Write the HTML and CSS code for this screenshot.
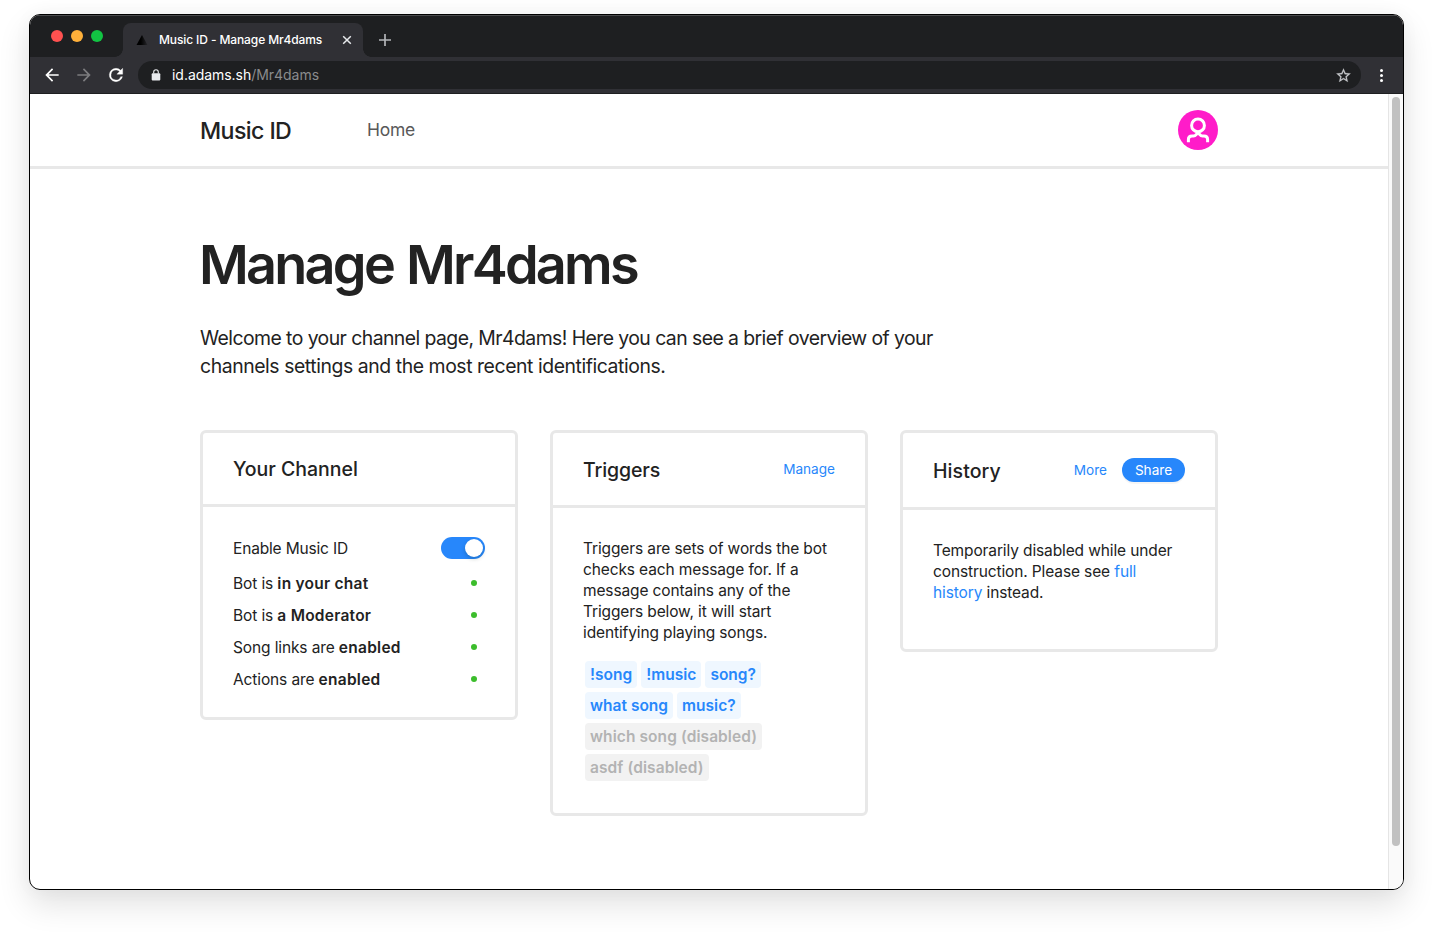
FILE: index.html
```html
<!DOCTYPE html>
<html lang="en">
<head>
<meta charset="utf-8">
<title>Music ID - Manage Mr4dams</title>
<link rel="stylesheet" href="styles.css">
</head>
<body>
<div class="window">
  <div class="tabstrip">
    <div class="lights"><i class="light red"></i><i class="light amber"></i><i class="light green"></i></div>
    <div class="tab">
      <svg class="favicon" width="12" height="12" viewBox="0 0 12 12"><defs><linearGradient id="fade" x1="0" x2="1"><stop offset=".4" stop-color="#000"/><stop offset="1" stop-color="#000" stop-opacity=".2"/></linearGradient></defs><path d="M6 1L11.5 11H.5z" fill="url(#fade)"/></svg>
      <span class="tab-title">Music ID - Manage Mr4dams</span>
      <svg class="tab-close" width="10" height="10" viewBox="0 0 10 10"><path d="M1.2 1.2l7.6 7.6M8.8 1.2L1.2 8.8" stroke="#e8eaed" stroke-width="1.5"/></svg>
    </div>
    <svg class="new-tab" width="14" height="14" viewBox="0 0 14 14"><path d="M7 1v12M1 7h12" stroke="#b4b6b9" stroke-width="1.7"/></svg>
  </div>
  <div class="toolbar">
    <svg class="nav-icon" width="20" height="20" viewBox="0 0 24 24"><path d="M20 11H7.83l5.59-5.59L12 4l-8 8 8 8 1.41-1.41L7.83 13H20z" fill="#fff"/></svg>
    <svg class="nav-icon" width="20" height="20" viewBox="0 0 24 24"><path d="M12 4l-1.41 1.41L16.17 11H4v2h12.17l-5.58 5.59L12 20l8-8z" fill="#7b7b7e"/></svg>
    <svg class="nav-icon" width="20" height="20" viewBox="0 0 24 24"><path d="M17.65 6.35A7.95 7.95 0 0 0 12 4a8 8 0 1 0 7.73 10h-2.08A6 6 0 1 1 12 6c1.66 0 3.14.69 4.22 1.78L13 11h7V4z" fill="#fff" stroke="#fff" stroke-width=".4"/></svg>
    <div class="omnibox">
      <svg class="lock" width="10" height="12" viewBox="0 0 10 12"><rect x=".7" y="4.3" width="8.6" height="7.2" rx="1" fill="#e8eaed"/><path d="M2.7 4.6V3.1a2.3 2.3 0 0 1 4.6 0v1.5" fill="none" stroke="#e8eaed" stroke-width="1.1"/></svg>
      <span class="url">id.adams.sh<span class="path">/Mr4dams</span></span>
      <svg class="star" width="17" height="17" viewBox="0 0 24 24"><path d="M22 9.24l-7.19-.62L12 2 9.19 8.63 2 9.24l5.46 4.73L5.82 21 12 17.27 18.18 21l-1.63-7.03zM12 15.4l-3.76 2.27 1-4.28-3.32-2.88 4.38-.38L12 6.1l1.71 4.04 4.38.38-3.32 2.88 1 4.28z" fill="#c4c6c9" stroke="#c4c6c9" stroke-width=".3"/></svg>
    </div>
    <svg class="menu" width="4" height="14" viewBox="0 0 4 14"><g fill="#fff"><circle cx="1.5" cy="2.5" r="1.5"/><circle cx="1.5" cy="7.5" r="1.5"/><circle cx="1.5" cy="12.5" r="1.5"/></g></svg>
  </div>
  <div class="viewport">
    <div class="page">
      <header class="site-header">
        <div class="header-inner">
          <a class="brand">Music ID</a>
          <a class="nav-home">Home</a>
          <svg class="avatar" width="40" height="40" viewBox="0 0 40 40"><circle cx="20" cy="20" r="20" fill="#ff1cc9"/><g fill="none" stroke="#fff" stroke-width="3"><circle cx="20" cy="15.4" r="6.4"/><path d="M10.4 32.3v-2.7q0-3.6 3.6-3.6h1.5c2 0 3-2 4.5-3.3 1.5 1.3 2.5 3.3 4.5 3.3h1.5q3.6 0 3.6 3.6v2.7"/></g></svg>
        </div>
      </header>
      <main class="content">
        <h1 class="title">Manage Mr4dams</h1>
        <p class="lead"><span class="lead-first">Welcome to your channel page, Mr4dams! Here you can see a brief overview of your</span><br><span>channels settings and the most recent identifications.</span></p>
        <div class="cards">
          <section class="card channel">
            <div class="card-head"><h2>Your Channel</h2></div>
            <div class="card-body">
              <div class="row first"><span>Enable Music ID</span><span class="switch"></span></div>
              <div class="row"><span>Bot is <b>in your chat</b></span><i class="dot"></i></div>
              <div class="row"><span>Bot is <b>a Moderator</b></span><i class="dot"></i></div>
              <div class="row"><span>Song links are <b>enabled</b></span><i class="dot"></i></div>
              <div class="row"><span>Actions are <b>enabled</b></span><i class="dot"></i></div>
            </div>
          </section>
          <section class="card triggers">
            <div class="card-head"><h2>Triggers</h2><a class="link">Manage</a></div>
            <div class="card-body">
              <p>Triggers are sets of words the bot<br>checks each message for. If a<br>message contains any of the<br>Triggers below, it will start<br>identifying playing songs.</p>
              <div class="tags">
                <span class="tag">!song</span><span class="tag">!music</span><span class="tag">song?</span>
                <span class="tag">what song</span><span class="tag">music?</span>
                <span class="tag off">which song (disabled)</span>
                <span class="tag off">asdf (disabled)</span>
              </div>
            </div>
          </section>
          <section class="card history">
            <div class="card-head"><h2>History</h2><div class="actions"><a class="link">More</a><a class="share">Share</a></div></div>
            <div class="card-body"><p>Temporarily disabled while under<br>construction. Please see <a class="inline">full<br>history</a> instead.</p></div>
          </section>
        </div>
      </main>
    </div>
    <div class="scrollbar"><div class="thumb"></div></div>
  </div>
</div>
</body>
</html>
```
FILE: styles.css
```css
* { box-sizing: border-box; }
body { margin: 0; height: 934px; padding: 14px 29px 0; overflow: hidden; background: #fff; font-family: Inter, "Liberation Sans", sans-serif; color: #222; }
h1, h2, p { margin: 0; }
svg { display: block; flex: none; }
.window { width: 1375px; height: 876px; border: 1px solid #000; border-radius: 11px; overflow: hidden; display: flex; flex-direction: column; box-shadow: 0 14px 32px rgba(0,0,0,.12), 0 0 20px rgba(0,0,0,.03); }

/* Browser chrome */
.tabstrip { height: 42px; flex: none; background: #1e1f21; display: flex; border-top: 1px solid #4a4b4d; }
.lights { display: flex; gap: 8px; padding: 14px 0 0 21px; width: 93px; }
.light { width: 12px; height: 12px; border-radius: 50%; }
.red { background: #ff5150; }
.amber { background: #ffb03a; }
.green { background: #12c443; }
.tab { position: relative; width: 240px; height: 34px; margin-top: 7px; padding: 0 11px 0 13px; background: #303035; border-radius: 8px 8px 0 0; display: flex; align-items: center; }
.tab::before, .tab::after { content: ""; position: absolute; bottom: 0; width: 8px; height: 8px; }
.tab::before { left: -8px; background: radial-gradient(circle at 0 0, transparent 7.5px, #303035 8px); }
.tab::after { right: -8px; background: radial-gradient(circle at 100% 0, transparent 7.5px, #303035 8px); }
.tab-title { margin-left: 11px; padding-bottom: 2px; flex: 1; font-size: 12px; font-weight: 500; letter-spacing: -.11px; color: #fff; white-space: nowrap; }
.new-tab { margin: 17px 0 0 15px; }
.toolbar { height: 37px; flex: none; background: #303035; border-bottom: 1px solid #1e1f21; display: flex; align-items: center; padding-left: 12px; gap: 12px; }
.omnibox { width: 1223px; height: 28px; background: #1e1f21; border-radius: 14px; display: flex; align-items: center; padding: 0 9.5px 0 13px; }
.url { flex: 1; margin-left: 11px; font-size: 14px; line-height: 20px; letter-spacing: -.04px; color: #fff; }
.path { color: #8a8b8d; }
.menu { margin-left: 7px; }
.viewport { flex: 1; display: flex; }
.page { flex: 1; }
.scrollbar { width: 15px; background: #fafafa; border-left: 1px solid #e5e5e5; padding: 3px 3px 0 3px; }
.thumb { width: 8px; height: 749px; border-radius: 4px; background: #c1c1c1; }

/* Site */
.site-header { height: 75px; border-bottom: 3px solid #e8e8e8; }
.header-inner { height: 72px; padding: 0 170px; display: flex; align-items: center; }
.brand { width: 167px; padding-top: 2px; font-size: 23.2px; font-weight: 500; letter-spacing: -.6px; line-height: 30px; }
.nav-home { flex: 1; font-size: 17.5px; letter-spacing: -.25px; color: #595959; line-height: 24px; }
.content { padding: 61px 170px 0; white-space: nowrap; }
.title { margin-left: -1px; font-size: 54px; line-height: 70px; font-weight: 600; letter-spacing: -2.75px; word-spacing: 2px; }
.lead { margin-top: 24px; font-size: 19.4px; line-height: 28px; letter-spacing: -.43px; }
.lead-first { letter-spacing: -.56px; }
.cards { display: flex; gap: 32px; align-items: flex-start; margin-top: 50px; }
.card { width: 318px; border: 3px solid #e8e8e8; border-radius: 6px; }
.card-head { height: 74px; border-bottom: 3px solid #e8e8e8; padding: 0 30px; display: flex; justify-content: space-between; align-items: center; }
.card-head h2 { font-size: 19.5px; line-height: 26px; font-weight: 500; letter-spacing: -.02px; }
.channel { height: 290px; }
.triggers { height: 386px; }
.triggers .card-head { height: 75px; }
.triggers h2, .history h2 { padding-top: 2px; }
.triggers .card-head h2 { letter-spacing: -.1px; }
.history .card-head h2 { letter-spacing: .07px; }
.history { height: 222px; }
.history .card-head { height: 77px; }
.card-body { padding: 30px 30px; font-size: 15.5px; line-height: 21px; letter-spacing: -.12px; }
.row { display: flex; justify-content: space-between; align-items: center; height: 32px; }
.row.first { height: 22px; margin-bottom: 8px; letter-spacing: -.17px; }
.channel b { font-weight: 600; letter-spacing: .25px; }
.switch { width: 44px; height: 22px; border-radius: 11px; background: #2787fb; padding: 2px; display: flex; justify-content: flex-end; }
.switch::before { content: ""; width: 18px; height: 18px; border-radius: 50%; background: #fff; box-shadow: 0 2px 4px rgba(0,35,11,.2); }
.dot { width: 6px; height: 6px; border-radius: 50%; background: #3cbd2c; margin-right: 8px; }
.link { color: #2787fb; font-size: 13.6px; line-height: 20px; }
.actions { display: flex; align-items: center; gap: 15px; }
.share { width: 63px; height: 24px; border-radius: 12px; background: #2787fb; color: #fff; font-size: 13.6px; line-height: 24px; text-align: center; letter-spacing: 0; box-shadow: 0 2px 0 rgba(0,0,0,.04); }
.inline { color: #2787fb; }
.tags { margin: 18px 0 0 2px; display: flex; flex-wrap: wrap; gap: 4px; width: 190px; }
.tag { height: 27px; padding: 0 5px; border-radius: 4px; background: #eff7ff; color: #2787fb; font-weight: 600; line-height: 27px; letter-spacing: .02px; }
.off { background: #f2f2f2; color: #b3b3b3; letter-spacing: .08px; }
```
